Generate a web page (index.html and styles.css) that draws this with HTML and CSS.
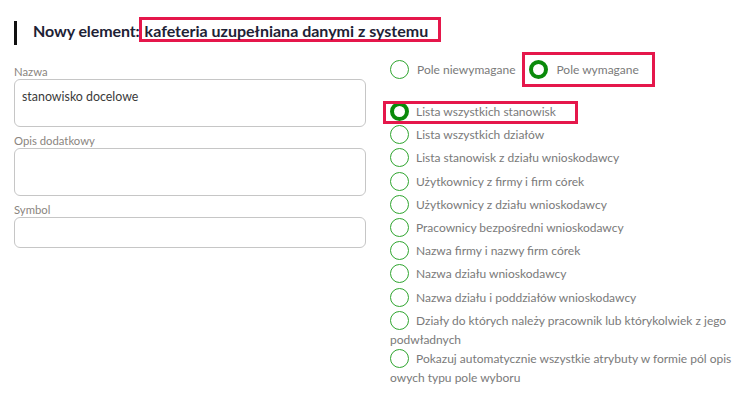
FILE: index.html
```html
<!DOCTYPE html>
<html lang="pl">
<head>
<meta charset="utf-8">
<title>Nowy element</title>
<link rel="stylesheet" href="styles.css">
</head>
<body>
<div class="page">
  <h1 class="title">Nowy element:<span class="title-name">kafeteria uzupełniana danymi z systemu</span></h1>
  <div class="columns">
    <div class="fields">
      <label class="field">
        <span class="field-label">Nazwa</span>
        <span class="input input-lg">stanowisko docelowe</span>
      </label>
      <label class="field">
        <span class="field-label">Opis dodatkowy</span>
        <span class="input input-lg"></span>
      </label>
      <label class="field">
        <span class="field-label">Symbol</span>
        <span class="input input-sm"></span>
      </label>
    </div>
    <div class="options">
      <div class="req-row">
        <span class="opt-inline"><span class="radio"></span>Pole niewymagane</span>
        <span class="opt-inline hl hl-req"><span class="radio checked"></span>Pole wymagane</span>
      </div>
      <div class="opt-list">
        <div class="opt"><span class="hl hl-list"><span class="radio checked"></span>Lista wszystkich stanowisk</span></div>
        <div class="opt"><span class="radio"></span>Lista wszystkich działów</div>
        <div class="opt"><span class="radio"></span>Lista stanowisk z działu wnioskodawcy</div>
        <div class="opt"><span class="radio"></span>Użytkownicy z firmy i firm córek</div>
        <div class="opt"><span class="radio"></span>Użytkownicy z działu wnioskodawcy</div>
        <div class="opt"><span class="radio"></span>Pracownicy bezpośredni wnioskodawcy</div>
        <div class="opt"><span class="radio"></span>Nazwa firmy i nazwy firm córek</div>
        <div class="opt"><span class="radio"></span>Nazwa działu wnioskodawcy</div>
        <div class="opt"><span class="radio"></span>Nazwa działu i poddziałów wnioskodawcy</div>
        <div class="opt"><span class="radio"></span>Działy do których należy pracownik lub którykolwiek z jego podwładnych</div>
        <div class="opt"><span class="radio"></span>Pokazuj automatycznie wszystkie atrybuty w formie pól opisowych typu pole wyboru</div>
      </div>
    </div>
  </div>
</div>
</body>
</html>
```
FILE: styles.css
```css
* { box-sizing: border-box; }
html, body { margin: 0; background: #fff; }
body {
  font-family: "Lato", "Noto Sans", sans-serif;
  color: #7a7a7a;
}
.page {
  width: 747px;
  padding: 21px 12px 0 14px;
}
.title {
  margin: 0;
  height: 24px;
  border-left: 3px solid #111;
  padding-left: 16px;
  font-size: 16px;
  line-height: 14px;
  font-weight: 700;
  color: #1e2235;
  white-space: nowrap;
  letter-spacing: -0.1px;
}
.title-name {
  display: inline-block;
  border: 3px solid #e5174b;
  padding: 2px 10px 0 3px;
  line-height: 17px;
  margin-left: -1px;
  margin-top: -4px;
  letter-spacing: 0;
}
.columns {
  display: grid;
  grid-template-columns: 352px 1fr;
  column-gap: 24px;
  margin-top: 13px;
}
.fields {
  display: flex;
  flex-direction: column;
  gap: 7px;
  padding-top: 7px;
}
.field { display: flex; flex-direction: column; }
.field-label {
  font-size: 11.3px;
  line-height: 14px;
  color: #8a8580;
}
.input {
  display: block;
  border: 1px solid #c6c6c6;
  border-radius: 6px;
  padding: 8px 7px;
  font-size: 12.4px;
  line-height: 17px;
  color: #3a3a3a;
}
.input-lg { height: 48px; }
.input-sm { height: 31px; }
.options { padding-top: 2px; }
.req-row {
  display: flex;
  align-items: center;
  gap: 14px;
  font-size: 12px;
  line-height: 19px;
}
.opt-inline { display: inline-flex; align-items: center; }
.radio {
  display: inline-block;
  width: 19px;
  height: 19px;
  border-radius: 50%;
  border: 1.5px solid #2fa52f;
  vertical-align: top;
  margin-right: 7px;
  background: #fff;
}
.radio.checked { border: 4.5px solid #0a8a0a; }
.opt-inline .radio { margin-right: 8px; }
.hl { position: relative; }
.hl::after {
  content: "";
  position: absolute;
  border: 3px solid #e5174b;
  pointer-events: none;
}
.hl-req::after { left: -7px; right: -16px; top: -8px; bottom: -8px; }
.hl-list::after { left: -7px; right: -22px; top: -3px; bottom: -5px; }
.opt-list {
  margin-top: 23px;
  width: 345px;
  font-size: 12px;
  line-height: 19px;
  word-break: break-all;
}
.opt { min-height: 23.2px; }
```
